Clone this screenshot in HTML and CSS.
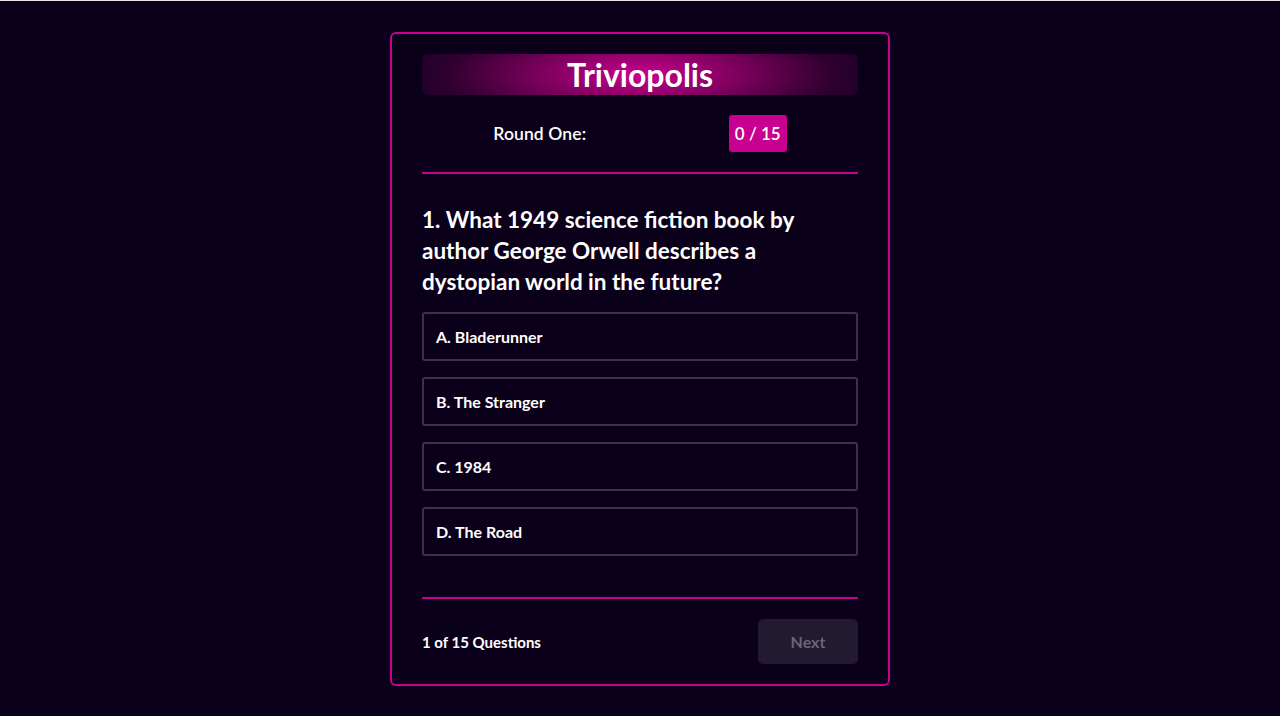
FILE: index.html
```html
<!DOCTYPE html>
<html lang="en">
<head>
<meta charset="utf-8">
<title>Triviopolis</title>
<link rel="stylesheet" href="styles.css">
</head>
<body>
<main class="card">
  <header class="banner"><h1 class="title">Triviopolis</h1></header>
  <div class="round-row">
    <span class="round-label">Round One:</span>
    <span class="score">0 / 15</span>
  </div>
  <hr class="divider">
  <h2 class="question">1. What 1949 science fiction book by author George Orwell describes a dystopian world in the future?</h2>
  <ul class="options">
    <li class="option">A. Bladerunner</li>
    <li class="option">B. The Stranger</li>
    <li class="option">C. 1984</li>
    <li class="option">D. The Road</li>
  </ul>
  <hr class="divider divider-bottom">
  <footer class="footer">
    <span class="count">1 of 15 Questions</span>
    <button class="next" disabled>Next</button>
  </footer>
</main>
</body>
</html>
```
FILE: styles.css
```css
html, body {
  margin: 0;
  padding: 0;
}
body {
  background: #0a0019;
  border-top: 1px solid #e4e4e4;
  padding-top: 31px;
  min-height: 716px;
  box-sizing: border-box;
  font-family: "Lato", "Open Sans", sans-serif;
  color: #ffffff;
}
.card {
  width: 500px;
  box-sizing: border-box;
  margin: 0 auto;
  border: 2px solid #c8008f;
  border-radius: 6px;
  padding: 20px 30px 20px;
  background: #0a0019;
}
.banner {
  height: 41px;
  border-radius: 6px;
  background: radial-gradient(ellipse 55% 160% at 50% 50%, #c8008f 0%, #80005f 40%, #300030 80%, #1a0025 100%);
  display: flex;
  align-items: center;
  justify-content: center;
}
.title {
  margin: 0;
  font-size: 32px;
  font-weight: 700;
  line-height: 41px;
}
.round-row {
  margin-top: 20px;
  display: flex;
  justify-content: space-around;
  align-items: center;
  height: 37px;
}
.round-label {
  font-size: 17.5px;
  font-weight: 600;
  letter-spacing: 0.1px;
}
.score {
  background: #c8008f;
  border-radius: 3px;
  padding: 0 6px;
  height: 37px;
  line-height: 37px;
  font-size: 17px;
  font-weight: 600;
}
.divider {
  border: 0;
  height: 2px;
  background: #c8008f;
  margin: 20px 0 0;
}
.question {
  margin: 30px 0 15px;
  font-size: 22.5px;
  line-height: 31px;
  font-weight: 700;
}
.options {
  list-style: none;
  margin: 0;
  padding: 0;
  display: flex;
  flex-direction: column;
  gap: 16px;
}
.option {
  height: 49px;
  box-sizing: border-box;
  border: 2px solid #3b3248;
  border-radius: 3px;
  padding: 0 12px;
  display: flex;
  align-items: center;
  font-size: 16px;
  font-weight: 700;
}
.divider-bottom {
  margin-top: 41px;
}
.footer {
  margin-top: 20px;
  display: flex;
  justify-content: space-between;
  align-items: center;
}
.count {
  font-size: 15px;
  font-weight: 700;
}
.next {
  width: 100px;
  height: 45px;
  border: 0;
  border-radius: 5px;
  background: #221a2e;
  color: #6b6378;
  font-family: inherit;
  font-size: 16px;
  font-weight: 700;
}
```
